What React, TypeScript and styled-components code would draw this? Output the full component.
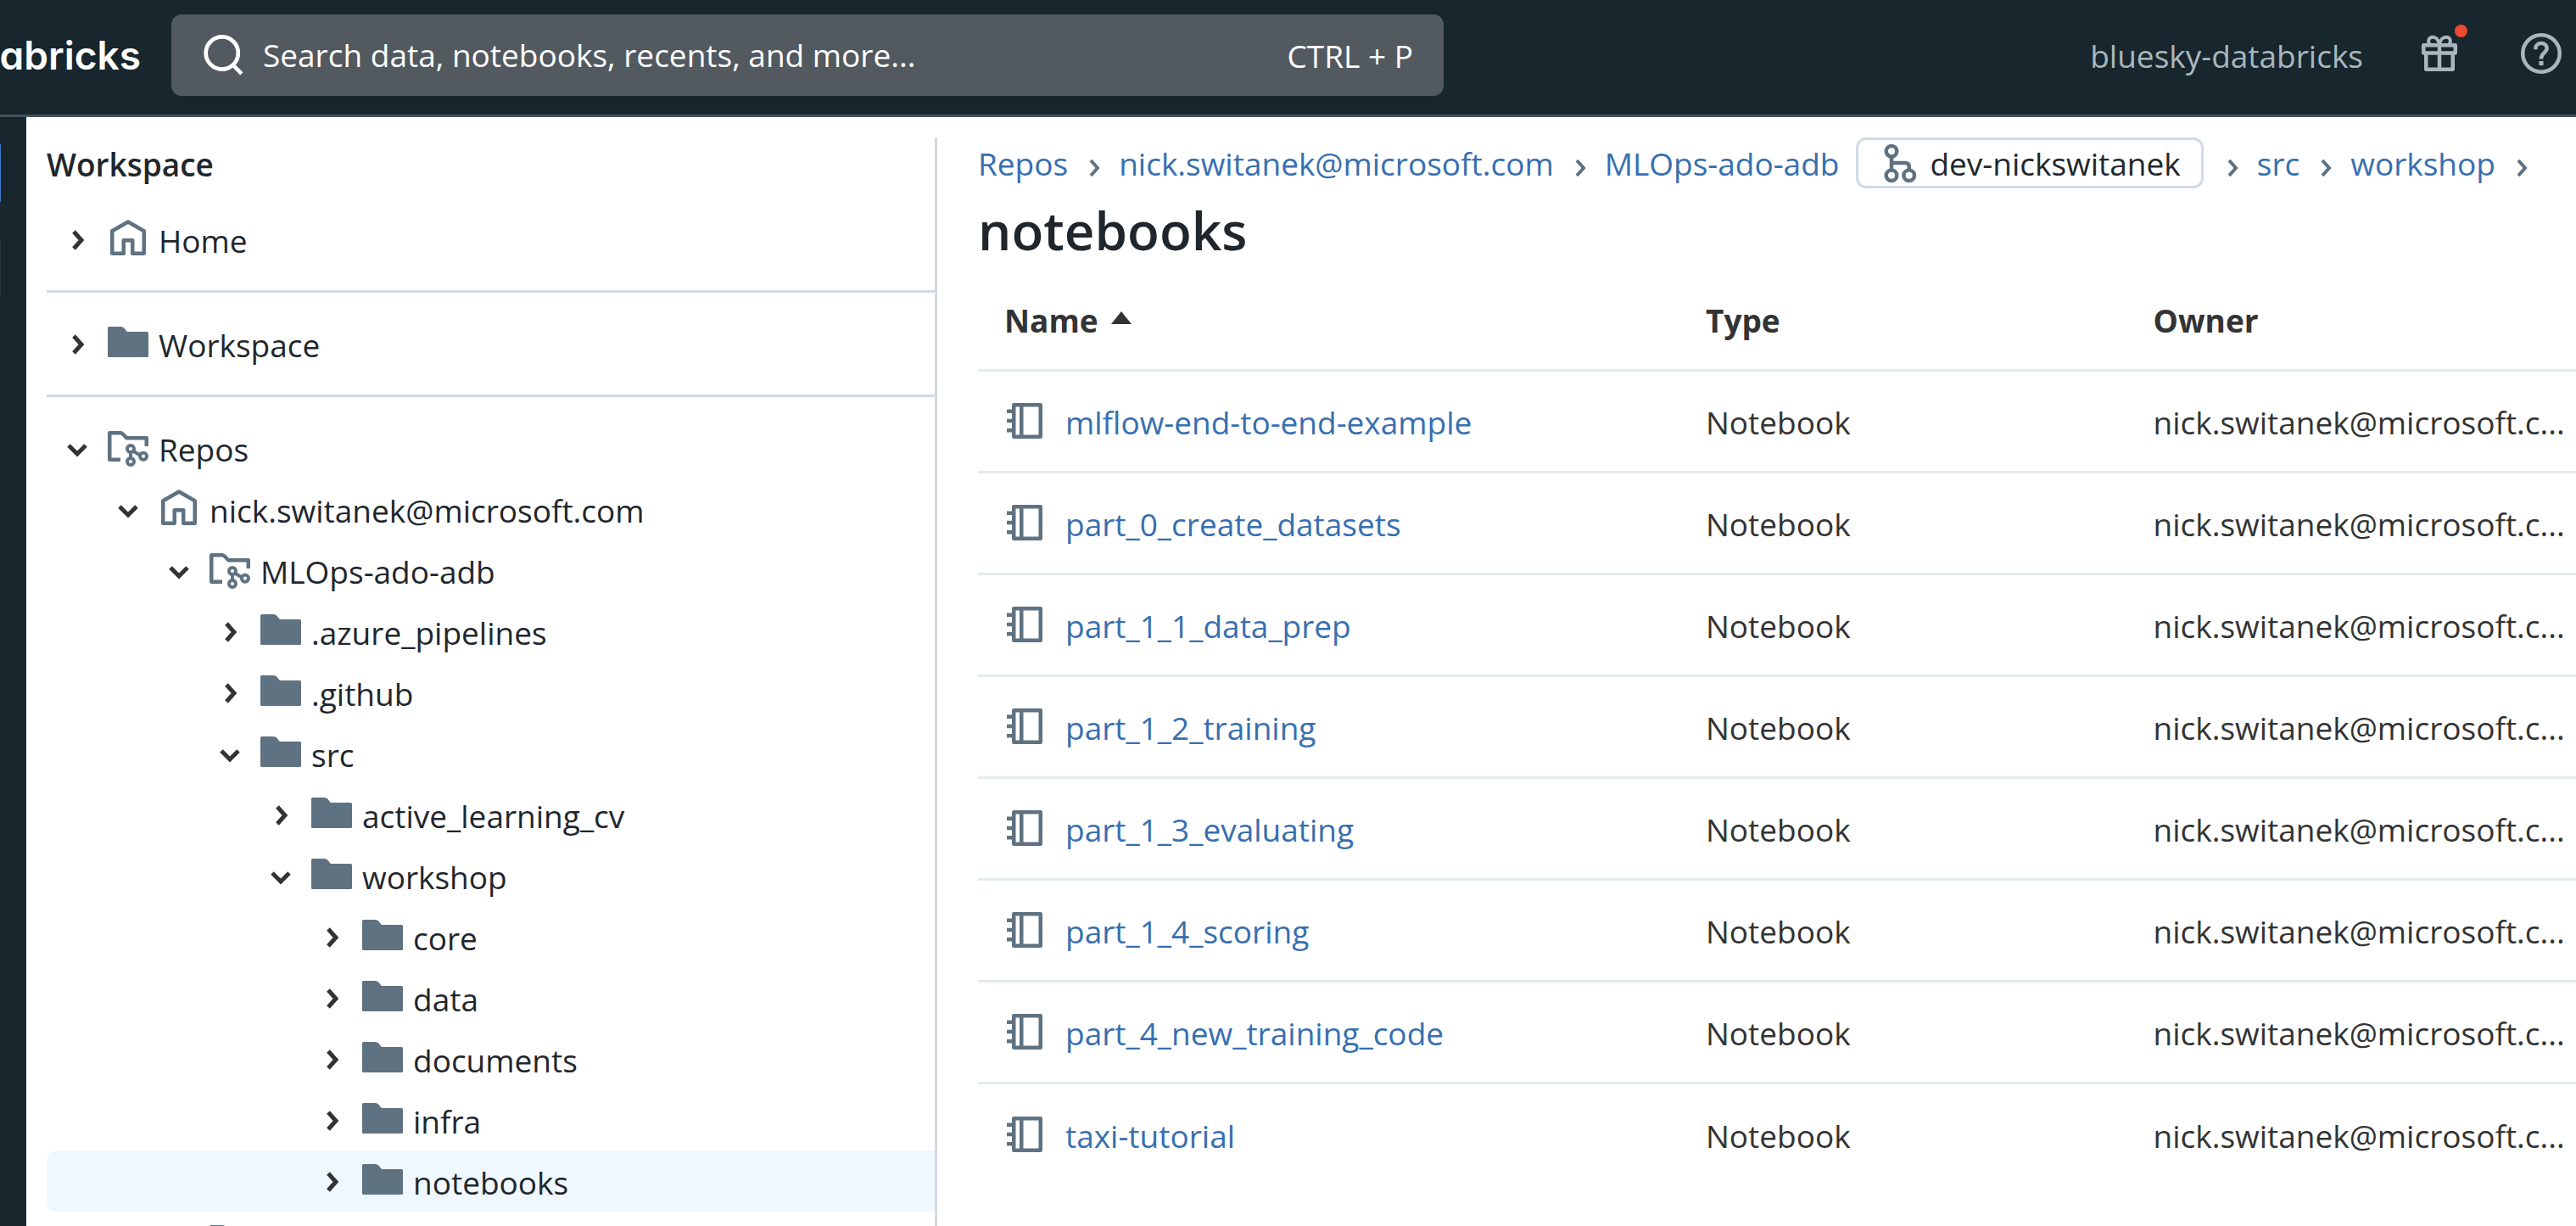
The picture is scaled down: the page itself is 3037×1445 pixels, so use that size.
import React from 'react';
import styled, { createGlobalStyle } from 'styled-components';

const color = {
  ink: '#1f272d',
  body: '#333333',
  icon: '#5f7281',
  link: '#376fb0',
  line: '#d0dbe6',
  rowLine: '#e4ebee',
  header: '#18262d',
  headerLine: '#43535a',
  headerText: '#a9b7bd',
};

const GlobalStyle = createGlobalStyle`
  * { box-sizing: border-box; }
  body {
    margin: 0;
    background: #ffffff;
    color: ${color.ink};
    font-family: "Open Sans", "Noto Sans", sans-serif;
    font-size: 37px;
  }
  button, input { font: inherit; color: inherit; }
  svg { display: block; flex: none; }
`;

const Page = styled.div`
  display: flex;
  flex-direction: column;
  height: 100vh;
  overflow: hidden;
`;

const TopBar = styled.header`
  display: flex;
  align-items: flex-start;
  flex: none;
  padding: 17px 17px 22px 0;
  background: ${color.header};
  border-bottom: 3px solid ${color.headerLine};
`;

const Logo = styled.a`
  display: flex;
  justify-content: flex-end;
  width: 166px;
  margin-right: 36px;
  color: #ffffff;
  font-family: Inter, "Open Sans", sans-serif;
  font-feature-settings: "cv11";
  font-size: 46px;
  font-weight: 600;
  line-height: 96px;
  text-decoration: none;
`;

const SearchBox = styled.label`
  display: flex;
  align-items: center;
  flex: 0 1 1500px;
  height: 96px;
  padding: 0 36px;
  gap: 22px;
  border-radius: 12px;
  background: #52595f;
  color: #ffffff;
`;

const SearchInput = styled.input`
  flex: 1;
  min-width: 0;
  padding: 0 0 2px;
  border: 0;
  outline: 0;
  background: transparent;
  &::placeholder { color: #ffffff; opacity: 1; }
`;

const Shortcut = styled.kbd`
  font-family: inherit;
`;

const TopActions = styled.div`
  display: flex;
  align-items: center;
  height: 96px;
  margin-left: auto;
  gap: 66px;
  color: ${color.headerText};
`;

const IconButton = styled.button`
  position: relative;
  padding: 0;
  border: 0;
  background: none;
`;

const Dot = styled.span`
  position: absolute;
  top: -10px;
  right: -9px;
  width: 15px;
  height: 15px;
  border-radius: 50%;
  background: #ed4b32;
`;

const ActionIcons = styled.div`
  display: flex;
  gap: 72px;
  padding-bottom: 4px;
`;

const Columns = styled.div`
  display: flex;
  flex: 1;
  min-height: 0;
`;

const Rail = styled.div`
  display: flex;
  flex-direction: column;
  gap: 45px;
  flex: none;
  width: 31px;
  padding-top: 32px;
  background: ${color.header};
`;

const RailItem = styled.div<{ $active?: boolean }>`
  width: 1px;
  height: 68px;
  background: ${(p) => (p.$active ? '#3f78c4' : '#243640')};
`;

const Sidebar = styled.nav`
  flex: none;
  width: 1074px;
  margin-top: 24px;
  padding-left: 24px;
  border-right: 3px solid ${color.line};
  overflow: hidden;
`;

const SidebarTitle = styled.h2`
  margin: 0 0 22px;
  padding-top: 2px;
  font-size: 37px;
  font-weight: 600;
  line-height: 60px;
`;

const Rule = styled.hr`
  height: 3px;
  margin: 24px 0;
  border: 0;
  background: ${color.line};
`;

const TreeRow = styled.button<{ $level: number; $selected?: boolean }>`
  display: flex;
  align-items: center;
  gap: 12px;
  width: 100%;
  height: 72px;
  padding: 2px 0 0 ${(p) => 12 + p.$level * 60}px;
  border: 0;
  border-radius: 12px 0 0 12px;
  background: ${(p) => (p.$selected ? '#f0f8ff' : 'transparent')};
  text-align: left;
`;

const TreeIcon = styled.span`
  padding-bottom: 6px;
  color: ${color.icon};
`;

const Main = styled.main`
  flex: 1;
  min-width: 0;
  padding: 24px 0 0 48px;
`;

const Crumbs = styled.nav`
  display: flex;
  align-items: center;
  height: 60px;
  white-space: nowrap;
  color: ${color.icon};
`;

const Link = styled.a`
  color: ${color.link};
  text-decoration: none;
`;

const BranchButton = styled.button`
  display: flex;
  align-items: center;
  gap: 9px;
  height: 60px;
  margin: 0 3px 0 20px;
  padding: 0 24px 0 27px;
  border: 3px solid ${color.line};
  border-radius: 12px;
  background: #ffffff;
  color: ${color.icon};
`;

const BranchName = styled.span`
  color: ${color.ink};
`;

const Title = styled.h1`
  margin: 0;
  padding-top: 4px;
  font-size: 62px;
  font-weight: 600;
  line-height: 90px;
`;

const Table = styled.table`
  width: 100%;
  border-collapse: collapse;
  table-layout: fixed;
  color: ${color.body};
`;

const Col = styled.col<{ $share: number }>`
  width: ${(p) => p.$share}%;
`;

const Tr = styled.tr`
  height: 120px;
  border-bottom: 3px solid ${color.rowLine};
  tbody &:last-child { border-bottom: 0; }
`;

const Th = styled.th`
  padding: 4px 0 0 29px;
  font-weight: 700;
  text-align: left;
`;

const Td = styled.td`
  padding: 3px 0 0 29px;
  overflow: hidden;
  white-space: nowrap;
`;

const Sort = styled.button`
  display: flex;
  align-items: center;
  gap: 14px;
  padding: 0 0 0 2px;
  border: 0;
  background: none;
`;

const NameCell = styled.div`
  display: flex;
  align-items: center;
  gap: 24px;
  padding-left: 2px;
  color: ${color.icon};
`;

const NotebookMark = styled.span`
  padding-bottom: 3px;
`;

const Svg = ({ size = 48, children }: { size?: number; children: React.ReactNode }) => (
  <svg width={size} height={size} viewBox="0 0 16 16" fill="none" stroke="currentColor" strokeWidth="1.5" aria-hidden="true">
    {children}
  </svg>
);

const HomeIcon = () => (
  <Svg>
    <path strokeLinejoin="round" d="M1.75 5.4 8 1.85l6.25 3.55v8.85h-4.5V9.1h-3.5v5.15h-4.5Z" />
  </Svg>
);

const FolderIcon = () => (
  <Svg>
    <path
      stroke="none"
      fill="currentColor"
      d="M0 2.5Q0 2 .5 2H4.8C5.9 2 6.4 2.4 6.8 3L7.6 4H15.5Q16 4 16 4.5V13.5Q16 14 15.5 14H.5Q0 14 0 13.5Z"
    />
  </Svg>
);

const RepoIcon = () => (
  <Svg>
    <path strokeLinejoin="round" d="M5 13.25H.75V2.75H5C5.9 2.75 6 3.3 7.4 4.75H15.25V8" />
    <g strokeWidth="1.3">
      <circle cx="9" cy="9" r="1.35" />
      <circle cx="9" cy="14" r="1.35" />
      <circle cx="14" cy="11.9" r="1.35" />
      <path d="M9 10.3v2.4M10 9.9l2.8 1.6" />
    </g>
  </Svg>
);

const NotebookIcon = () => (
  <Svg>
    <path strokeLinejoin="round" d="M3.75 1.75h10.5v12.5H3.75ZM6.75 1.75v12.5M1 4.25h2.5M1 8h2.5M1 11.75h2.5" />
  </Svg>
);

const BranchIcon = () => (
  <Svg>
    <circle cx="4" cy="3.4" r="2.1" />
    <circle cx="4" cy="12.9" r="2.1" />
    <circle cx="10.9" cy="12.9" r="2.1" />
    <path d="M4 5.5v5.3M4 8h5.4q1.5 0 1.5 1.5v1.3" />
  </Svg>
);

const SearchIcon = () => (
  <Svg size={50}>
    <circle cx="7.6" cy="7.2" r="6.1" />
    <path d="M11.7 11.7l3.3 3.3" />
  </Svg>
);

const GiftIcon = () => (
  <Svg>
    <path strokeLinejoin="round" d="M1.75 4.75h12.5v3.1H1.75ZM2.75 7.85h10.5v6.4H2.75ZM8 4.75v9.5" />
    <path
      strokeWidth="1.3"
      d="M8 4.6C7.6 2.5 6.6 1.6 5.4 1.6 3.6 1.6 3.2 3.5 4.4 4.6M8 4.6C8.4 2.5 9.4 1.6 10.6 1.6 12.4 1.6 12.8 3.5 11.6 4.6"
    />
  </Svg>
);

const HelpIcon = () => (
  <Svg>
    <circle cx="8" cy="8" r="7.25" />
    <path d="M5.8 6.4V6C5.8 4.9 6.7 4 8 4s2.2.9 2.2 2c0 1.7-2.2 1.8-2.2 3.9v.3" />
    <path strokeWidth="1.7" d="M8 11v1.7" />
  </Svg>
);

const Chevron = ({ open }: { open?: boolean }) => (
  <svg width="48" height="48" viewBox="0 0 48 48" fill="none" stroke={color.body} strokeWidth="5" aria-hidden="true">
    <path d={open ? 'M14 20l10 10 10-10' : 'M20 14l9 10-9 10'} />
  </svg>
);

const CrumbChevron = () => (
  <svg width="60" height="60" viewBox="0 0 60 60" fill="none" stroke="currentColor" strokeWidth="4" aria-hidden="true">
    <path d="M27 27l8 9-8 9" />
  </svg>
);

const SortUp = () => (
  <svg width="26" height="30" viewBox="0 0 26 30" fill="currentColor" aria-hidden="true">
    <path d="M13 5 25 20H1Z" />
  </svg>
);

const icons = { home: HomeIcon, folder: FolderIcon, repo: RepoIcon };

type Node = { label?: string; icon: keyof typeof icons; level: number; open?: boolean; selected?: boolean };

const tree: Node[] = [
  { label: 'Repos', icon: 'repo', level: 0, open: true },
  { label: 'nick.switanek@microsoft.com', icon: 'home', level: 1, open: true },
  { label: 'MLOps-ado-adb', icon: 'repo', level: 2, open: true },
  { label: '.azure_pipelines', icon: 'folder', level: 3 },
  { label: '.github', icon: 'folder', level: 3 },
  { label: 'src', icon: 'folder', level: 3, open: true },
  { label: 'active_learning_cv', icon: 'folder', level: 4 },
  { label: 'workshop', icon: 'folder', level: 4, open: true },
  { label: 'core', icon: 'folder', level: 5 },
  { label: 'data', icon: 'folder', level: 5 },
  { label: 'documents', icon: 'folder', level: 5 },
  { label: 'infra', icon: 'folder', level: 5 },
  { label: 'notebooks', icon: 'folder', level: 5, selected: true },
  { icon: 'repo', level: 2 },
];

const notebooks = [
  'mlflow-end-to-end-example',
  'part_0_create_datasets',
  'part_1_1_data_prep',
  'part_1_2_training',
  'part_1_3_evaluating',
  'part_1_4_scoring',
  'part_4_new_training_code',
  'taxi-tutorial',
];

const TreeItem = ({ label, icon, level, open, selected }: Node) => {
  const Icon = icons[icon];
  return (
    <TreeRow type="button" $level={level} $selected={selected} aria-expanded={!!open}>
      <Chevron open={open} />
      <TreeIcon>
        <Icon />
      </TreeIcon>
      {label}
    </TreeRow>
  );
};

export default function App() {
  return (
    <Page>
      <GlobalStyle />
      <TopBar>
        <Logo href="#">abricks</Logo>
        <SearchBox>
          <SearchIcon />
          <SearchInput type="search" aria-label="Search" placeholder="Search data, notebooks, recents, and more..." />
          <Shortcut>CTRL + P</Shortcut>
        </SearchBox>
        <TopActions>
          <span>bluesky-databricks</span>
          <ActionIcons>
            <IconButton type="button" aria-label="What's new">
              <GiftIcon />
              <Dot />
            </IconButton>
            <IconButton type="button" aria-label="Help">
              <HelpIcon />
            </IconButton>
          </ActionIcons>
        </TopActions>
      </TopBar>
      <Columns>
        <Rail>
          <RailItem $active />
          <RailItem />
        </Rail>
        <Sidebar aria-label="Workspace">
          <SidebarTitle>Workspace</SidebarTitle>
          <TreeItem label="Home" icon="home" level={0} />
          <Rule />
          <TreeItem label="Workspace" icon="folder" level={0} />
          <Rule />
          {tree.map((node, i) => (
            <TreeItem key={i} {...node} />
          ))}
        </Sidebar>
        <Main>
          <Crumbs aria-label="Breadcrumb">
            <Link href="#">Repos</Link>
            <CrumbChevron />
            <Link href="#">nick.switanek@microsoft.com</Link>
            <CrumbChevron />
            <Link href="#">MLOps-ado-adb</Link>
            <BranchButton type="button">
              <BranchIcon />
              <BranchName>dev-nickswitanek</BranchName>
            </BranchButton>
            <CrumbChevron />
            <Link href="#">src</Link>
            <CrumbChevron />
            <Link href="#">workshop</Link>
            <CrumbChevron />
          </Crumbs>
          <Title>notebooks</Title>
          <Table>
            <colgroup>
              <Col $share={44} />
              <Col $share={28} />
              <Col $share={28} />
            </colgroup>
            <thead>
              <Tr>
                <Th>
                  <Sort type="button">
                    Name
                    <SortUp />
                  </Sort>
                </Th>
                <Th>Type</Th>
                <Th>Owner</Th>
              </Tr>
            </thead>
            <tbody>
              {notebooks.map((name) => (
                <Tr key={name}>
                  <Td>
                    <NameCell>
                      <NotebookMark>
                        <NotebookIcon />
                      </NotebookMark>
                      <Link href="#">{name}</Link>
                    </NameCell>
                  </Td>
                  <Td>Notebook</Td>
                  <Td>nick.switanek@microsoft.c...</Td>
                </Tr>
              ))}
            </tbody>
          </Table>
        </Main>
      </Columns>
    </Page>
  );
}
